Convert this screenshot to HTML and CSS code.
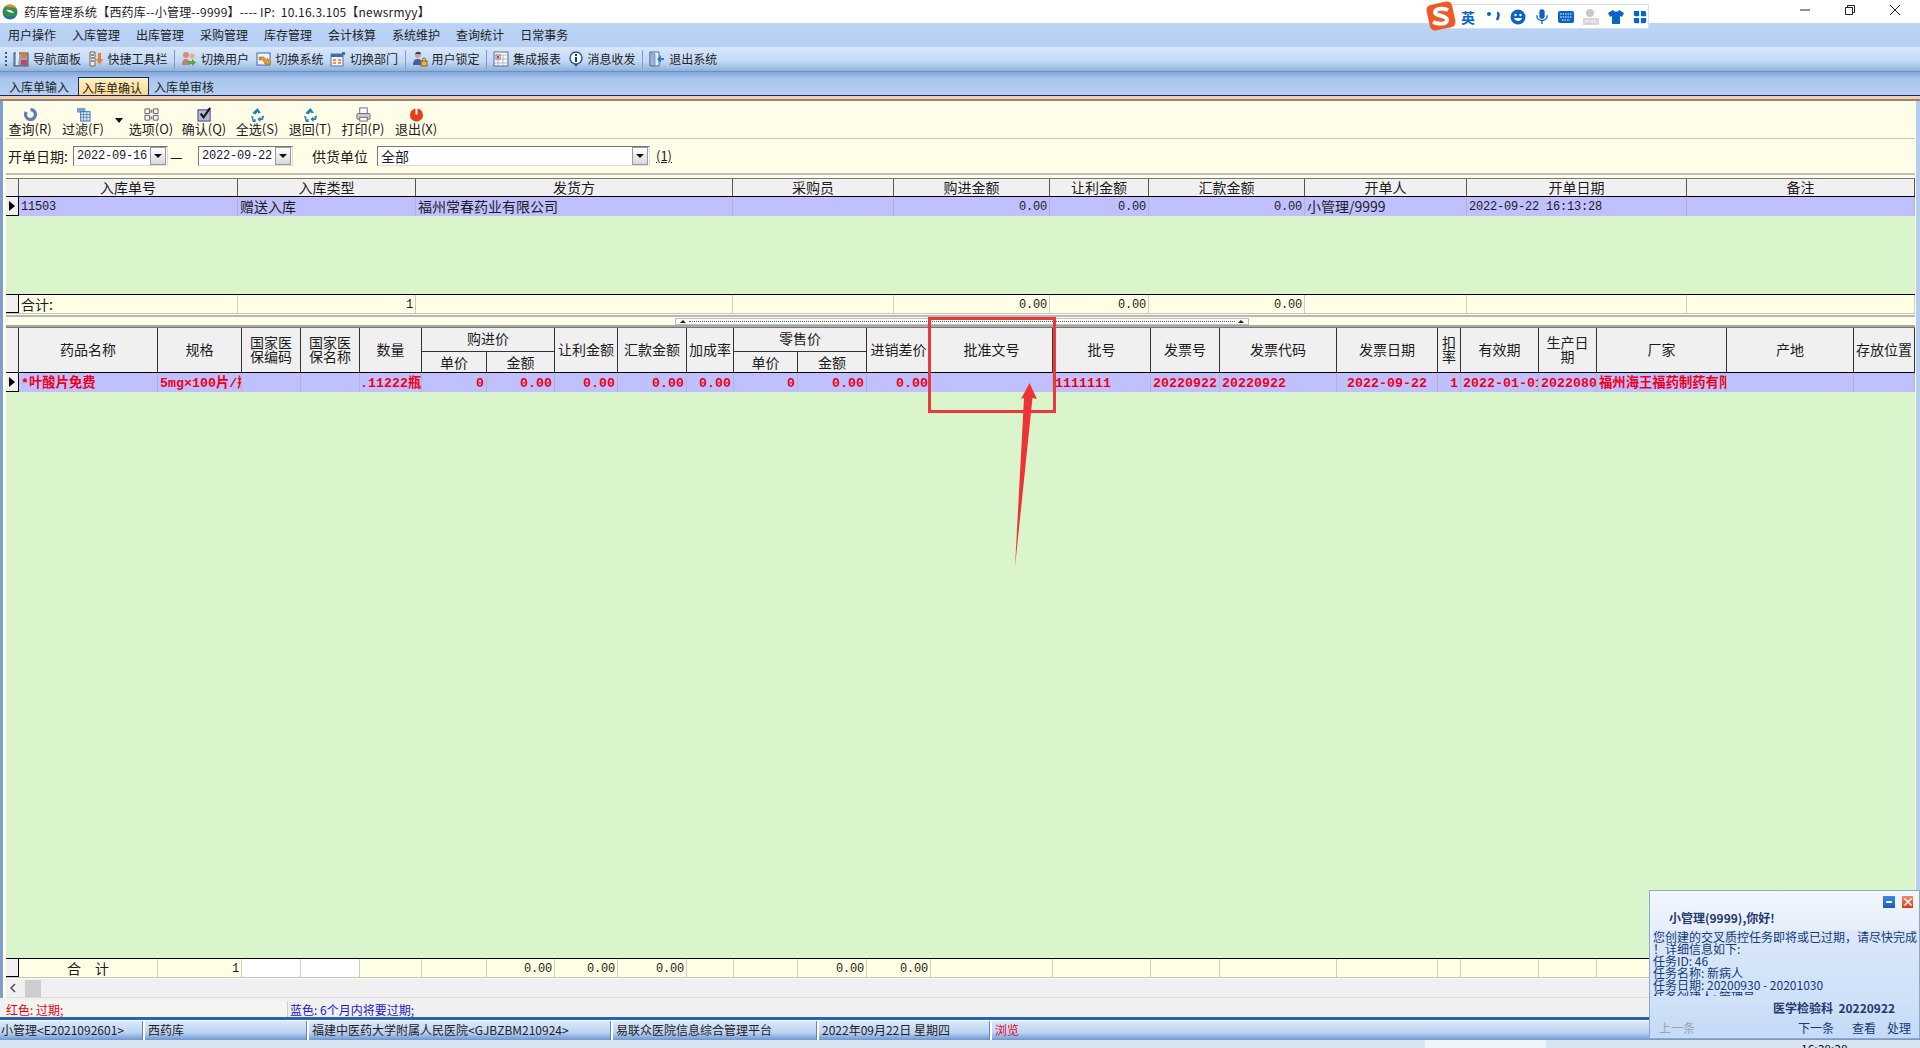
FILE: index.html
```html
<!DOCTYPE html>
<html lang="zh-CN">
<head>
<meta charset="utf-8">
<title>药库管理系统</title>
<link rel="stylesheet" href="styles.css">
</head>
<body>
<div class="app">
  <header class="titlebar">
    <svg class="logo" viewBox="0 0 16 18" width="16" height="18"><circle cx="8" cy="9" r="7.500" fill="#2f8f4e"/><path d="M2 4c4-4 11-3 13 2-4-2-9-2-13-2z" fill="#e8892b"/><path d="M1 11c3 3 8 4 13 1-2 5-10 6-13-1z" fill="#2468b8"/><path d="M4 7c3-1 6 0 8 3-3 0-6-1-8-3z" fill="#fff"/></svg>
    <span class="title-text">药库管理系统【西药库--小管理--9999】---- IP:&nbsp; 10.16.3.105【newsrmyy】</span>
    <div class="winctl">
      <svg viewBox="0 0 12 12" width="12" height="12"><path d="M1 6h10" stroke="#222" fill="none"/></svg>
      <svg viewBox="0 0 12 12" width="12" height="12"><path d="M1.500 3.500h7v7h-7zM3.500 3.500v-2h7v7h-2" stroke="#222" fill="none"/></svg>
      <svg viewBox="0 0 12 12" width="12" height="12"><path d="M1 1l10 10M11 1L1 11" stroke="#222" fill="none"/></svg>
    </div>
  </header>
  <nav class="menubar">
    <span>用户操作</span><span>入库管理</span><span>出库管理</span><span>采购管理</span><span>库存管理</span><span>会计核算</span><span>系统维护</span><span>查询统计</span><span>日常事务</span>
  </nav>
  <div class="toolbar">
    <i class="grip"></i>
    <span class="tool"><svg viewBox="0 0 16 16" width="16" height="16"><rect x="1" y="2" width="14" height="13" fill="#8fa2cc" stroke="#40507a"/><path d="M3 1h3v5l-1 8H3z" fill="#e8e8f0"/><circle cx="11" cy="4" r="3" fill="#e8792c"/><path d="M8 9h6v5H8z" fill="#c8484a"/></svg>导航面板</span>
    <span class="tool"><svg viewBox="0 0 16 16" width="16" height="16"><path d="M2 1h5v14H2z" fill="#efeadb" stroke="#6f6a58"/><path d="M3 4h3M3 7h3M3 10h3" stroke="#333"/><path d="M10 2h3v6h2l-3.500 6L8 8h2z" fill="#e8842c"/></svg>快捷工具栏</span>
    <i class="sep"></i>
    <span class="tool"><svg viewBox="0 0 16 16" width="16" height="16"><circle cx="5" cy="4" r="3" fill="#d88a78"/><circle cx="11" cy="5" r="2.500" fill="#e8b078"/><path d="M1 14c0-5 2-6 4-6s4 2 4 6z" fill="#c87a78"/><path d="M7 10h4V8l4 3.500L11 15v-2H7z" fill="#58a83c"/></svg>切换用户</span>
    <span class="tool"><svg viewBox="0 0 16 16" width="16" height="16"><rect x="1" y="2" width="13" height="12" fill="#eef4fb" stroke="#3a6cb0"/><path d="M3 6h5l2 3h1V7l4 4-4 4v-2H9L7 9H3z" fill="#e89a2c" stroke="#a06010" stroke-width=".5"/></svg>切换系统</span>
    <span class="tool"><svg viewBox="0 0 16 16" width="16" height="16"><rect x="1" y="3" width="12" height="12" fill="#eef3fa" stroke="#4a78b8"/><rect x="1" y="3" width="12" height="3" fill="#3a6cb0"/><path d="M3 8h3v2H3zM8 8h3v2H8zM3 11h3v2H3zM8 11h3v2H8z" fill="#e89a2c"/><path d="M12 1h3v3h-3z" fill="#3a6cb0"/></svg>切换部门</span>
    <i class="sep"></i>
    <span class="tool"><svg viewBox="0 0 16 16" width="16" height="16"><circle cx="6" cy="4" r="3" fill="#d8a088"/><path d="M3 3c1-3 6-3 6 0z" fill="#2a3f7a"/><path d="M1 14c0-5 2-6 5-6s4 2 4 6z" fill="#3f5fa8"/><rect x="9" y="10" width="6" height="5" fill="#e8b83c" stroke="#8a6018"/><path d="M10.500 10V8.500a1.500 1.500 0 0 1 3 0V10" stroke="#8a6018" fill="none"/></svg>用户锁定</span>
    <i class="sep"></i>
    <span class="tool"><svg viewBox="0 0 16 16" width="16" height="16"><rect x="1" y="1" width="14" height="14" fill="#f6f6fb" stroke="#5a6a9a"/><path d="M1 4h14M5 4v11M10 4v11M1 8h14M1 12h14" stroke="#99a" stroke-width=".6"/><rect x="3" y="4" width="4" height="4" fill="#fff" stroke="#333" stroke-width=".6"/><rect x="4" y="5" width="2" height="2" fill="#c8383a"/></svg>集成报表</span>
    <span class="tool"><svg viewBox="0 0 16 16" width="16" height="16"><circle cx="8" cy="7" r="6" fill="#fff" stroke="#2a55a0" stroke-width="1.400"/><path d="M7 3h2v2H7zM7 6h2v5H7z" fill="#16387a"/><path d="M6 13l2 3 2-3z" fill="#2a55a0"/></svg>消息收发</span>
    <i class="sep"></i>
    <span class="tool"><svg viewBox="0 0 16 16" width="16" height="16"><path d="M1 1h9v14H1z" fill="#e8eef8" stroke="#5a6a8a"/><path d="M1 1l5 2v12l-5-1z" fill="#9ab4d8" stroke="#4a6a9a" stroke-width=".6"/><path d="M15 7h-3V4L8 8l4 4V9h3z" fill="#1f88d8"/></svg>退出系统</span>
  </div>
  <div class="tabs">
    <span class="tab">入库单输入</span><span class="tab active">入库单确认</span><span class="tab">入库单审核</span>
  </div>
  <div class="tabline"></div>
  <main class="panel">
    <div class="cmdbar">
      <span class="cmd"><svg viewBox="0 0 16 16" width="15" height="15"><path d="M8 1a7 7 0 1 1-6 3.500L5 6a3.600 3.600 0 1 0 3-1.500z" fill="#5a7fb0"/></svg>查询(R)</span>
      <span class="cmd"><svg viewBox="0 0 16 16" width="15" height="15"><rect x="1" y="1" width="9" height="5" fill="#7ea0d0"/><rect x="5" y="5" width="10" height="10" fill="#dfe9f6" stroke="#2f6fb0"/><path d="M5 8h10M5 11h10M8 5v10M11.500 5v10" stroke="#2f6fb0" stroke-width=".7"/></svg>过滤(F)</span>
      <i class="caret"></i>
      <span class="cmd"><svg viewBox="0 0 16 16" width="15" height="15"><path d="M1 2h5v5H1zM10 2h5v5h-5zM1 9h5v5H1zM10 9h5v5h-5z" fill="#f6f6ee" stroke="#54606e"/><path d="M7 3h2v3H7zM7 10h2v3H7z" fill="#c86a28"/></svg>选项(O)</span>
      <span class="cmd"><svg viewBox="0 0 16 16" width="15" height="15"><rect x="1" y="3" width="13" height="12" fill="#b4b8dc" stroke="#40447a"/><path d="M4 7l3 4 7-10" stroke="#111" stroke-width="2.200" fill="none"/></svg>确认(Q)</span>
      <span class="cmd"><svg viewBox="0 0 16 16" width="15" height="15"><path d="M8 1l3.500 5-2.500 1-1-2-2 3-3.500-1.500zM15 9l-1 4.500-3 .5v2l-3-3 3-3v2h2l-1-2zM1 9l3 2-1 2h3v3H3z" fill="#1f7fb8"/></svg>全选(S)</span>
      <span class="cmd"><svg viewBox="0 0 16 16" width="15" height="15"><path d="M8 1l3.500 5-2.500 1-1-2-2 3-3.500-1.500zM15 9l-1 4.500-3 .5v2l-3-3 3-3v2h2l-1-2zM1 9l3 2-1 2h3v3H3z" fill="#1f7fb8"/></svg>退回(T)</span>
      <span class="cmd"><svg viewBox="0 0 16 16" width="15" height="15"><rect x="4" y="1" width="8" height="6" fill="#fff" stroke="#667"/><rect x="1" y="7" width="14" height="6" rx="1" fill="#c9ced6" stroke="#667"/><rect x="4" y="11" width="8" height="4" fill="#fff" stroke="#667"/></svg>打印(P)</span>
      <span class="cmd"><svg viewBox="0 0 16 16" width="15" height="15"><circle cx="8" cy="8.500" r="7" fill="#e0421c"/><rect x="7" y="1" width="2" height="7" fill="#fff"/></svg>退出(X)</span>
    </div>
    <div class="filter">
      <label>开单日期:</label>
      <span class="combo date"><b>2022-09-16</b><i class="drop"></i></span>
      <span class="dash">—</span>
      <span class="combo date"><b>2022-09-22</b><i class="drop"></i></span>
      <label class="supplier">供货单位</label>
      <span class="combo wide"><em>全部</em><i class="drop"></i></span>
      <span class="count">(1)</span>
    </div>
    <section class="master">
      <div class="g1 head">
        <div class="c"></div><div class="c">入库单号</div><div class="c">入库类型</div><div class="c">发货方</div><div class="c">采购员</div><div class="c">购进金额</div><div class="c">让利金额</div><div class="c">汇款金额</div><div class="c">开单人</div><div class="c">开单日期</div><div class="c">备注</div>
      </div>
      <div class="g1 row sel">
        <div class="c ind"><i class="tri"></i></div><div class="c num">11503</div><div class="c">赠送入库</div><div class="c">福州常春药业有限公司</div><div class="c"></div><div class="c num r">0.00</div><div class="c num r">0.00</div><div class="c num r">0.00</div><div class="c">小管理/9999</div><div class="c num">2022-09-22 16:13:28</div><div class="c"></div>
      </div>
      <div class="fill"></div>
      <div class="g1 row total">
        <div class="c ind"></div><div class="c">合计:</div><div class="c num r">1</div><div class="c"></div><div class="c"></div><div class="c num r">0.00</div><div class="c num r">0.00</div><div class="c num r">0.00</div><div class="c"></div><div class="c"></div><div class="c"></div>
      </div>
    </section>
    <div class="splitter"><div class="grabber"><i class="up"></i><i class="dots"></i><i class="up"></i></div></div>
    <section class="detail">
      <div class="g2 head2">
        <div class="c tall"></div><div class="c tall">药品名称</div><div class="c tall">规格</div><div class="c tall wrap">国家医保编码</div><div class="c tall wrap">国家医保名称</div><div class="c tall">数量</div>
        <div class="c group">购进价</div>
        <div class="c tall">让利金额</div><div class="c tall">汇款金额</div><div class="c tall">加成率</div>
        <div class="c group">零售价</div>
        <div class="c tall">进销差价</div><div class="c tall">批准文号</div><div class="c tall">批号</div><div class="c tall">发票号</div><div class="c tall">发票代码</div><div class="c tall">发票日期</div><div class="c tall wrap narrow">扣率</div><div class="c tall">有效期</div><div class="c tall wrap">生产日期</div><div class="c tall">厂家</div><div class="c tall">产地</div><div class="c tall">存放位置</div>
        <div class="c">单价</div><div class="c">金额</div><div class="c">单价</div><div class="c">金额</div>
      </div>
      <div class="g2 row sel alert">
        <div class="c ind"><i class="tri"></i></div><div class="c">*叶酸片免费</div><div class="c">5mg×100片/瓶</div><div class="c"></div><div class="c"></div><div class="c r tight">.11222瓶</div><div class="c r">0</div><div class="c r">0.00</div><div class="c r">0.00</div><div class="c r">0.00</div><div class="c r">0.00</div><div class="c r">0</div><div class="c r">0.00</div><div class="c r">0.00</div><div class="c"></div><div class="c">1111111</div><div class="c">20220922</div><div class="c">20220922</div><div class="c ctr">2022-09-22</div><div class="c r">1</div><div class="c">2022-01-01</div><div class="c">20220801</div><div class="c">福州海王福药制药有限公司</div><div class="c"></div><div class="c"></div>
      </div>
      <div class="fill"></div>
      <div class="g2 row total foot">
        <div class="c ind"></div><div class="c ctr">合　计</div><div class="c num r">1</div><div class="c blank"></div><div class="c blank"></div><div class="c"></div><div class="c"></div><div class="c num r">0.00</div><div class="c num r">0.00</div><div class="c num r">0.00</div><div class="c"></div><div class="c"></div><div class="c num r">0.00</div><div class="c num r">0.00</div><div class="c"></div><div class="c"></div><div class="c"></div><div class="c"></div><div class="c"></div><div class="c"></div><div class="c"></div><div class="c"></div><div class="c"></div><div class="c"></div><div class="c"></div>
      </div>
      <div class="hscroll"><svg viewBox="0 0 8 10" width="8" height="10"><path d="M6 1L2 5l4 4" stroke="#444" stroke-width="1.400" fill="none"/></svg><i class="thumb"></i></div>
    </section>
    <div class="legend">
      <span class="red">红色: 过期;</span>
      <span class="blue">蓝色: 6个月内将要过期;</span>
    </div>
  </main>
  <footer class="status">
    <span class="s1">小管理&lt;E2021092601&gt;</span><span class="s2">西药库</span><span class="s3">福建中医药大学附属人民医院&lt;GJBZBM210924&gt;</span><span class="s4">易联众医院信息综合管理平台</span><span class="s5">2022年09月22日 星期四</span><span class="s6">浏览</span>
  </footer>
  <div class="taskbar"><i class="taskwhite"></i><span class="clock">16:38:38</span></div>
</div>

<div class="ime">
  <svg class="ime-s" viewBox="0 0 32 32" width="32" height="32"><rect x="3" y="3" width="26" height="26" rx="5" fill="#ee5a24" transform="rotate(-12 16 16)"/><path d="M23 10c-4-2-12-2-13 2s12 3 12 8-10 4-14 2" stroke="#fff" stroke-width="4" fill="none"/></svg>
  <b class="ime-t">英</b>
  <svg viewBox="0 0 16 16" width="16" height="16"><circle cx="4" cy="5" r="2" fill="#0a64c8"/><path d="M12 4c2 0 2 3 0 7" stroke="#0a64c8" stroke-width="2.500" fill="none"/></svg>
  <svg viewBox="0 0 16 16" width="16" height="16"><circle cx="8" cy="8" r="7.500" fill="#0a64c8"/><circle cx="5.500" cy="6" r="1.200" fill="#fff"/><circle cx="10.500" cy="6" r="1.200" fill="#fff"/><path d="M4 9c1 4 7 4 8 0z" fill="#fff"/></svg>
  <svg viewBox="0 0 16 18" width="14" height="18"><rect x="5" y="0" width="6" height="11" rx="3" fill="#0a64c8"/><path d="M2 7c0 8 12 8 12 0M8 13v4" stroke="#0a64c8" stroke-width="1.500" fill="none"/></svg>
  <svg viewBox="0 0 16 14" width="16" height="14"><rect x="0" y="1" width="16" height="12" rx="2" fill="#0a64c8"/><path d="M2 4h12M2 7h12M4 10h8" stroke="#fff" stroke-dasharray="1.500 1" fill="none"/></svg>
  <svg viewBox="0 0 16 16" width="16" height="16"><circle cx="7" cy="4" r="4" fill="#c9c9c9"/><rect x="0" y="9" width="16" height="7" fill="#d6d6d6"/><path d="M2 12h4M9 11v3M12 11v3" stroke="#fff"/></svg>
  <svg viewBox="0 0 16 16" width="16" height="16"><path d="M5 1L0 4l2 4 2-1v8h8V7l2 1 2-4-5-3c-1 2-5 2-6 0z" fill="#0a64c8"/></svg>
  <svg viewBox="0 0 16 16" width="14" height="14"><path d="M1 1h6v6H3a2 2 0 0 1-2-2zM9 1h4a2 2 0 0 1 2 2v4H9zM1 9h6v6H3a2 2 0 0 1-2-2zM9 9h6v4a2 2 0 0 1-2 2H9z" fill="#0a64c8"/></svg>
</div>

<div class="callout"></div>
<svg class="arrow" viewBox="0 0 32 190" width="32" height="190"><path d="M19.500 3L27 19l-4.500-1L5 187l9-169-3 1z" fill="#ee3338"/></svg>

<aside class="popup">
  <div class="pop-btns"><i class="pop-min"></i><i class="pop-close">×</i></div>
  <div class="pop-hello">小管理(9999),你好!</div>
  <div class="pop-msg">您创建的交叉质控任务即将或已过期，请尽快完成<br>！详细信息如下:<br>任务ID: 46<br>任务名称: 新病人<br>任务日期: 20200930 - 20201030<br>任务创建人: 管理员</div>
  <div class="pop-from">医学检验科&nbsp; 20220922</div>
  <div class="pop-links"><span class="prev">上一条</span><span class="next">下一条</span><span class="view">查看</span><span class="handle">处理</span></div>
</aside>
</body>
</html>
```
FILE: styles.css
```css
* { box-sizing: border-box; }
html, body { margin: 0; padding: 0; height: 1048px; overflow: hidden; }
body { font: 12px/1 "Noto Sans CJK SC", sans-serif; color: #1c1c1c; background: #fff; position: relative; }
i, em { font-style: normal; }
.app { display: flex; flex-direction: column; height: 1048px; }

.titlebar { height: 23px; flex: none; background: #fff; display: flex; align-items: center; padding-left: 2px; color: #222; }
.logo { margin-right: 6px; flex: none; }
.title-text { white-space: nowrap; line-height: 23px; letter-spacing: .2px; }
.winctl { margin-left: auto; display: flex; gap: 33px; padding-right: 19px; align-self: flex-start; padding-top: 4px; }

.menubar { height: 24px; flex: none; background: linear-gradient(#bcd4f6, #b6cff3); display: flex; align-items: center; gap: 16px; padding-left: 8px; color: #222; }
.toolbar { height: 25px; flex: none; background: linear-gradient(#d8e7fb, #c3d9f6 60%, #8fb0dc); border-bottom: 1px solid #6e8fc0; display: flex; align-items: center; padding-left: 5px; color: #222; }
.grip { width: 2px; height: 15px; margin-right: 6px; background: repeating-linear-gradient(#44597e 0 2px, transparent 2px 4px); }
.tool { display: flex; align-items: center; gap: 4px; margin-right: 6.500px; white-space: nowrap; }
.sep { width: 1px; height: 19px; background: #7f9cc8; margin: 0 6px 0 0; }

.tabs { height: 24px; flex: none; padding: 5px 0 0 2px; background: linear-gradient(#7fa4d8, #a9c6ee 30%, #b8d0f2); border-bottom: 1px solid #10286a; display: flex; align-items: stretch; }
.tab { padding: 1px 3px 0 7px; width: 76px; white-space: nowrap; line-height: 17px; color: #222; }
.tab.active { width: 71px; padding-left: 3px; background: linear-gradient(#fff2c4, #ffd88a); border: 1px solid #10286a; border-bottom: 0; }
.tab.active + .tab { padding-left: 5px; }
.tabline { height: 5px; flex: none; background: #f6cfa8; border-bottom: 2px solid #888; }

.panel { flex: 1 1 auto; min-height: 0; padding: 0 1px 0 6px; background: linear-gradient(90deg, #7c9fd0 0 3px, transparent 3px), #fffde8; display: flex; flex-direction: column; border-right: 4px solid #b5cdf0; }
.cmdbar { height: 38px; flex: none; padding: 6px 0 0 4px; display: flex; align-items: flex-start; border-bottom: 1px solid #c8c8c0; }
.cmd { display: flex; flex-direction: column; align-items: center; width: 40px; margin-right: 13px; white-space: nowrap; font-size: 13px; line-height: 13px; color: #222; }
.cmd svg { display: block; }
.caret { width: 0; height: 0; border: 4.500px solid transparent; border-top: 5px solid #111; border-bottom: 0; margin: 11px 8px 0 -1px; }
.filter { height: 36px; flex: none; padding: 7px 0 0 2px; display: flex; align-items: flex-start; font-size: 14px; border-bottom: 2px solid #c0c0b8; }
.filter label { line-height: 20px; white-space: nowrap; width: 65px; }
.filter .supplier { margin: 0 8px 0 19px; width: 57px; }
.combo { display: flex; height: 20px; background: #fff; border: 1px solid; border-color: #777 #ddd #ddd #777; align-items: center; justify-content: space-between; padding: 0 1px 0 3px; }
.combo b { font: 12px "Liberation Mono", monospace; letter-spacing: -.2px; white-space: nowrap; }
.combo em { font-size: 14px; }
.date { width: 95px; }
.wide { width: 273px; }
.dash { width: 30px; line-height: 20px; padding-left: 2px; }
.drop { width: 16px; height: 18px; background: linear-gradient(#fff, #d8d8d8); border: 1px solid #999; position: relative; display: block; flex: none; }
.drop::after { content: ""; position: absolute; left: 3px; top: 6px; border: 4px solid transparent; border-top: 4px solid #111; }
.count { margin-left: 6px; line-height: 20px; font-size: 13px; text-decoration: underline; }

.master { margin: 3px 0 0 0; height: 139px; flex: none; display: flex; flex-direction: column; border-bottom: 2px solid #b8b8b8; padding-bottom: 1px; }
.g1, .g2 { display: grid; flex: none; }
.g1 { grid-template-columns: 13px 219px 178px 317px 161px 156px 99px 156px 162px 220px 228px; }
.g2 { grid-template-columns: 13px 139px 84px 59px 59px 62px 65px 68px 63px 69px 47px 64px 69px 64px 122px 98px 69px 117px 101px 23px 78px 58px 130px 127px 61px; }
.c { overflow: hidden; white-space: nowrap; border-right: 1px solid #b4b4cf; padding: 0 2px; line-height: 18px; font-size: 14px; min-width: 0; }
.head { height: 19px; background: #f0f0f0; border-top: 1px solid #777; border-bottom: 1px solid #000; }
.head .c { text-align: center; border-right: 1px solid #555; line-height: 17px; padding: 0; overflow: visible; }
.head2 { height: 46px; background: #f0f0f0; border-top: 1px solid #777; border-bottom: 1px solid #000; grid-template-rows: 24px 21px; }
.head2 .c { text-align: center; border-right: 1px solid #333; padding: 0; line-height: 20px; overflow: visible; }
.head2 .tall { padding-bottom: 3px; }
.tall { grid-row: span 2; display: flex; align-items: center; justify-content: center; }
.head2 .wrap { white-space: normal; line-height: 14px; padding: 0 6px 3px; }
.head2 .narrow { padding: 0 4px 3px; }
.group { grid-column: span 2; border-bottom: 1px solid #333; }
.row { height: 19px; }
.sel { background: #c0c0ff; }
.ind { background: #f0f0f0; border-right: 1px solid #000; border-bottom: 1px solid #000; position: relative; padding: 0; }
.tri { position: absolute; left: 3px; top: 4px; width: 0; height: 0; border: 5px solid transparent; border-left: 6px solid #000; border-right: 0; }
.num { font-family: "Liberation Mono", "Noto Sans CJK SC", monospace; font-size: 12px; letter-spacing: -.2px; line-height: 21px; }
.total .num { line-height: 20px; }
.r { text-align: right; }
.ctr { text-align: center; }
.fill { flex: 1 1 auto; min-height: 0; background: #daf5cb; }
.total { background: #ffffe6; border-top: 1px solid #000; border-bottom: 1px solid #c4c4c4; height: 20px; }
.total .c { border-right-color: #cfcfc0; }
.total .ind { background: #f0f0f0; border-right-color: #000; }
.alert .c { color: #f00018; font-weight: 700; font-family: "Liberation Mono", "Noto Sans CJK SC", monospace; font-size: 13.330px; padding: 0 2px; line-height: 22px; }
.alert .ind { padding: 0; }
.alert .tight { padding: 0; }
.blank { background: #fff; }

.splitter { height: 10px; flex: none; padding: 1px 0 0 669px; border-bottom: 2px solid #a8a8a8; }
.grabber { width: 574px; height: 7px; border: 1px solid #bbb; display: flex; align-items: center; justify-content: space-between; padding: 0 4px; background: #fffef4; }
.up { width: 0; height: 0; border: 3px solid transparent; border-bottom: 3px solid #222; border-top: 0; flex: none; }
.dots { flex: 1; margin: 0 3px; border-top: 1px dotted #2a7a70; }

.detail { flex: 1 1 auto; min-height: 0; display: flex; flex-direction: column; }
.hscroll { height: 19px; flex: none; background: #f0f0f0; display: flex; align-items: center; padding-left: 3px; border-bottom: 1px solid #ddd; margin-top: 1px; }
.thumb { width: 16px; height: 17px; background: #cdcdcd; margin-left: 8px; }
.legend { height: 22px; flex: none; display: flex; gap: 2px; padding: 3px 0 0 6px; background: #f0f0f0; border-bottom: 3px solid #2a62ac; margin: 0 -5px -1px -6px; }
.legend span { line-height: 17px; white-space: nowrap; }
.legend .red { width: 282px; color: #e8000e; border-right: 1px solid #ccc; background: #f4f4f0; }
.legend .blue { color: #1a1ad0; }

.status { height: 19px; flex: none; margin-top: 2px; display: flex; gap: 2px; background: #fff; }
.status span { background: linear-gradient(#dbe9fb, #bdd4f3 60%, #6f97d2); line-height: 18px; padding-left: 3px; white-space: nowrap; overflow: hidden; border-right: 1px solid #5f86c0; color: #222; }
.s1 { width: 143px; padding-left: 1px !important; }
.s2 { width: 162px; }
.s3 { width: 302px; }
.s4 { width: 204px; }
.s5 { width: 171px; }
.s6 { flex: 1; color: #e8002a !important; }
.taskbar { height: 8px; flex: none; background: #d6e5ef; overflow: hidden; display: flex; }
.taskwhite { margin-left: 1425px; width: 121px; background: #eef4f8; }
.clock { margin-left: 255px; font-size: 12px; line-height: 12px; padding-top: 3px; color: #111; }

.ime { position: absolute; left: 1450px; top: 4px; width: 199px; height: 25px; background: #fff; border: 1px solid #d0dff2; display: flex; align-items: center; gap: 9px; padding-left: 10px; }
.ime-s { position: absolute; left: -26px; top: -5px; }
.ime-t { color: #0a64c8; font-size: 14px; margin-right: 1px; }

.callout { position: absolute; left: 928px; top: 317px; width: 128px; height: 96px; border: 3px solid #e8393c; }
.arrow { position: absolute; left: 1010px; top: 380px; }

.popup { position: absolute; left: 1649px; top: 890px; width: 271px; height: 149px; background: linear-gradient(#f2f6fd, #c4daf6); border: 1px solid #8fa8c8; color: #143a78; }
.pop-btns { position: absolute; right: 6px; top: 5px; display: flex; gap: 7px; }
.pop-min { width: 12px; height: 12px; background: linear-gradient(#3d8ae0, #1d5cb8); position: relative; }
.pop-min::after { content: ""; position: absolute; left: 3px; top: 5px; width: 6px; height: 2px; background: #fff; }
.pop-close { width: 11px; height: 12px; background: linear-gradient(#f08a6a, #d83a1c); color: #fff; font-size: 12px; line-height: 11px; text-align: center; font-weight: 700; }
.pop-hello { position: absolute; left: 19px; top: 20px; font-weight: 700; color: #1f3a6e; line-height: 14px; white-space: nowrap; }
.pop-msg { position: absolute; left: 3px; top: 39px; width: 266px; height: 66px; overflow: hidden; line-height: 12px; white-space: nowrap; background: linear-gradient(#dbe8fa, #cfe1f8); padding-top: 1px; }
.pop-from { position: absolute; left: 123px; top: 110px; font-weight: 700; color: #1f3a6e; white-space: nowrap; line-height: 14px; }
.pop-links { position: absolute; left: 9px; top: 130px; display: flex; white-space: nowrap; line-height: 14px; }
.pop-links .prev { color: #9aa4b0; }
.pop-links .next { margin-left: 103px; }
.pop-links .view { margin-left: 18px; }
.pop-links .handle { margin-left: 11px; }
```
